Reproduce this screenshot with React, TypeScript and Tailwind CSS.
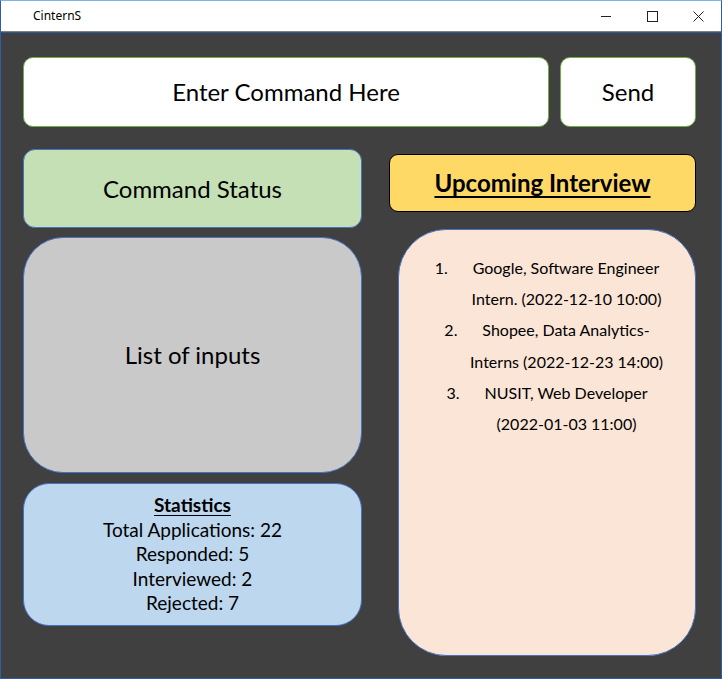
const font = { fontFamily: "Lato, 'Noto Sans', sans-serif" };

const interviews = [
  { n: "1.", first: "Google, Software Engineer", rest: "Intern. (2022-12-10 10:00)" },
  { n: "2.", first: "Shopee, Data Analytics-", rest: "Interns (2022-12-23 14:00)" },
  { n: "3.", first: "NUSIT, Web Developer", rest: "(2022-01-03 11:00)" },
];

function TitleBar() {
  return (
    <div className="flex h-[31px] items-center border-b border-[#808080] bg-white">
      <span className="ml-[32px] text-[12px] text-black" style={{ fontFamily: "'Noto Sans', sans-serif" }}>
        CinternS
      </span>
      <div className="ml-auto flex h-full items-center">
        {/* minimize */}
        <div className="flex h-full w-[46px] items-center justify-center">
          <svg width="10" height="10" viewBox="0 0 10 10">
            <path d="M0 5.5h10" stroke="#222" strokeWidth="1" />
          </svg>
        </div>
        {/* maximize */}
        <div className="flex h-full w-[46px] items-center justify-center">
          <svg width="11" height="11" viewBox="0 0 11 11">
            <rect x="0.5" y="0.5" width="10" height="10" fill="none" stroke="#222" strokeWidth="1" />
          </svg>
        </div>
        {/* close */}
        <div className="flex h-full w-[46px] items-center justify-center">
          <svg width="11" height="11" viewBox="0 0 11 11">
            <path d="M0.5 0.5l10 10M10.5 0.5l-10 10" stroke="#222" strokeWidth="1" />
          </svg>
        </div>
      </div>
    </div>
  );
}

export default function App() {
  return (
    <div className="flex h-[679px] w-[722px] flex-col border-x border-b border-t border-[#2f5ea6] border-t-[#7fb2e5] bg-[#404040]" style={font}>
      <TitleBar />
      <div className="h-px bg-[#2b579a]" />

      <div className="flex flex-col px-[22px] pt-[24px]">
        {/* Command row */}
        <div className="flex gap-[11px]">
          <div className="flex h-[70px] w-[526px] items-center justify-center rounded-[10px] border border-[#70ad47] bg-white text-[24px] text-black">
            Enter Command Here
          </div>
          <div className="flex h-[70px] w-[136px] items-center justify-center rounded-[10px] border border-[#70ad47] bg-white text-[24px] text-black">
            Send
          </div>
        </div>

        <div className="mt-[22px] flex">
          {/* Left column */}
          <div className="flex w-[339px] flex-col">
            <div className="flex h-[79px] items-center justify-center rounded-[12px] border border-[#4472c4] bg-[#c5e0b4] text-[24px] text-black">
              Command Status
            </div>
            <div className="mt-[9px] flex h-[236px] items-center justify-center rounded-[40px] border border-[#4472c4] bg-[#c9c9c9] text-[24px] text-black">
              List of inputs
            </div>
            <div className="mt-[10px] flex h-[143px] flex-col items-center rounded-[26px] border border-[#4472c4] bg-[#bdd7ee] pt-[9px] text-[19px] leading-[24.5px] text-black">
              <span className="font-bold underline underline-offset-[3px]">Statistics</span>
              <span>Total Applications: 22</span>
              <span>Responded: 5</span>
              <span>Interviewed: 2</span>
              <span>Rejected: 7</span>
            </div>
          </div>

          {/* Right column */}
          <div className="ml-[27px] flex w-[307px] flex-col pt-[5px]">
            <div className="flex h-[58px] items-center justify-center rounded-[9px] border border-black bg-[#ffd966] text-[24px] font-bold text-black underline underline-offset-[4px]">
              Upcoming Interview
            </div>
            <div className="ml-[9px] mt-[17px] h-[427px] rounded-[48px] border border-[#4472c4] bg-[#fbe5d6] pt-[22px] text-[16px] leading-[31.2px] text-black">
              {interviews.map((it) => (
                <div key={it.n}>
                  <div className="text-center">
                    <span className="inline-block w-[38px] text-left">{it.n}</span>
                    {it.first}
                  </div>
                  <div className="pl-[39px] text-center">{it.rest}</div>
                </div>
              ))}
            </div>
          </div>
        </div>
      </div>
    </div>
  );
}
